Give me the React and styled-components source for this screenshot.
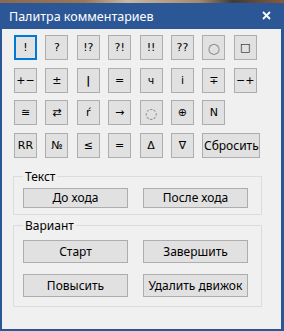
import styled, { createGlobalStyle } from "styled-components";

const GlobalStyle = createGlobalStyle`
  html, body {
    margin: 0;
    padding: 0;
    background: #3a3a3a;
  }
  body {
    font-family: "Noto Sans", "Open Sans", "DejaVu Sans", sans-serif;
    font-size: 12px;
  }
`;

// null marks an empty cell in the palette grid
const symbols = [
  "!", "?", "!?", "?!", "!!", "??", "○", "□",
  "+−", "±", "|", "=", "ч", "i", "∓", "−+",
  "≅", "⇄", "ŕ", "→", "◌", "⊕", "N", null,
  "RR", "№", "≤", "=", "Δ", "∇",
];

export default function App() {
  return (
    <>
      <GlobalStyle />
      <Desktop />
      <Window>
        <TitleBar>
          <Title>Палитра комментариев</Title>
          <CloseButton aria-label="Закрыть">
            <svg width="9" height="9" viewBox="0 0 9 9">
              <path d="M1 1 L8 8 M8 1 L1 8" stroke="#fff" strokeWidth="1.8" />
            </svg>
          </CloseButton>
        </TitleBar>
        <Body>
          <SymbolGrid>
            {symbols.map((s, i) =>
              s === null ? (
                <span key={i} />
              ) : (
                <SymbolButton
                  key={i}
                  $focused={i === 0}
                  $light={s === "○" || s === "◌"}
                  $bold={s === "|"}
                >
                  {s}
                </SymbolButton>
              )
            )}
            <ResetButton>Сбросить</ResetButton>
          </SymbolGrid>
          <Group $top={4} $bottom={6}>
            <Legend>Текст</Legend>
            <ActionRow>
              <ActionButton $h={20}>До хода</ActionButton>
              <ActionButton $h={20}>После хода</ActionButton>
            </ActionRow>
          </Group>
          <Group $top={7} $bottom={9} $gap>
            <Legend>Вариант</Legend>
            <ActionRow>
              <ActionButton $h={23}>Старт</ActionButton>
              <ActionButton $h={23}>Завершить</ActionButton>
              <ActionButton $h={23}>Повысить</ActionButton>
              <ActionButton $h={23}>Удалить движок</ActionButton>
            </ActionRow>
          </Group>
        </Body>
      </Window>
    </>
  );
}

const Desktop = styled.div`
  height: 3px;
  background: linear-gradient(90deg, #8a6a4e 0%, #9a7656 30%, #c8b8a4 45%, #a88a6c 70%, #3c3c3c 82%, #8c5a3c 100%);
`;

const Window = styled.div`
  width: 279px;
  background: #f0f0f0;
  border-left: 2px solid #2b5797;
  border-right: 3px solid #2b5797;
  border-bottom: 2px solid #2b5797;
`;

const TitleBar = styled.div`
  height: 26px;
  margin: 0 -3px 0 -2px;
  padding: 0 13px 0 9px;
  background: #2b5797;
  display: flex;
  align-items: center;
  justify-content: space-between;
`;

const Title = styled.span`
  color: #fff;
  font-size: 12.5px;
`;

const CloseButton = styled.span`
  display: flex;
  align-items: center;
  margin-top: -2px;
`;

const Body = styled.div`
  padding: 6px 0 22px 11px;
`;

const SymbolGrid = styled.div`
  display: grid;
  grid-template-columns: repeat(8, 23px);
  grid-auto-rows: 25px;
  column-gap: 8.4px;
  row-gap: 7.5px;
  margin-left: 1px;
`;

const ButtonBase = styled.button`
  box-sizing: border-box;
  margin: 0;
  padding: 0;
  font-family: "Noto Sans", "DejaVu Sans", sans-serif;
  font-size: 12px;
  color: #000;
  background: #e1e1e1;
  border: 1px solid #adadad;
  border-radius: 0;
  display: flex;
  align-items: center;
  justify-content: center;
  white-space: nowrap;
`;

const SymbolButton = styled(ButtonBase)`
  width: 23px;
  height: 25px;
  border: ${(p) => (p.$focused ? "2px solid #0078d7" : "1px solid #adadad")};
  color: ${(p) => (p.$light ? "#808080" : "#000")};
  font-family: "DejaVu Sans", "Noto Sans", sans-serif;
  font-size: ${(p) => (p.$light ? "14px" : "11px")};
  font-weight: ${(p) => (p.$bold ? 700 : 400)};
`;

const ResetButton = styled(ButtonBase)`
  grid-column: 7 / span 2;
  width: 58px;
  height: 25px;
`;

const Group = styled.fieldset`
  margin: ${(p) => (p.$gap ? "4px" : "12px")} 20px 0 0;
  padding: ${(p) => p.$top}px 0 ${(p) => p.$bottom}px 9px;
  border: 1px solid #dcdcdc;
  width: 249px;
  box-sizing: border-box;
`;

const Legend = styled.legend`
  padding: 0 2px;
  margin-left: 0;
  font-size: 12px;
  line-height: 14px;
  color: #000;
`;

const ActionRow = styled.div`
  display: grid;
  grid-template-columns: 105px 105px;
  column-gap: 15px;
  row-gap: 11px;
`;

const ActionButton = styled(ButtonBase)`
  width: 105px;
  height: ${(p) => p.$h}px;
`;
